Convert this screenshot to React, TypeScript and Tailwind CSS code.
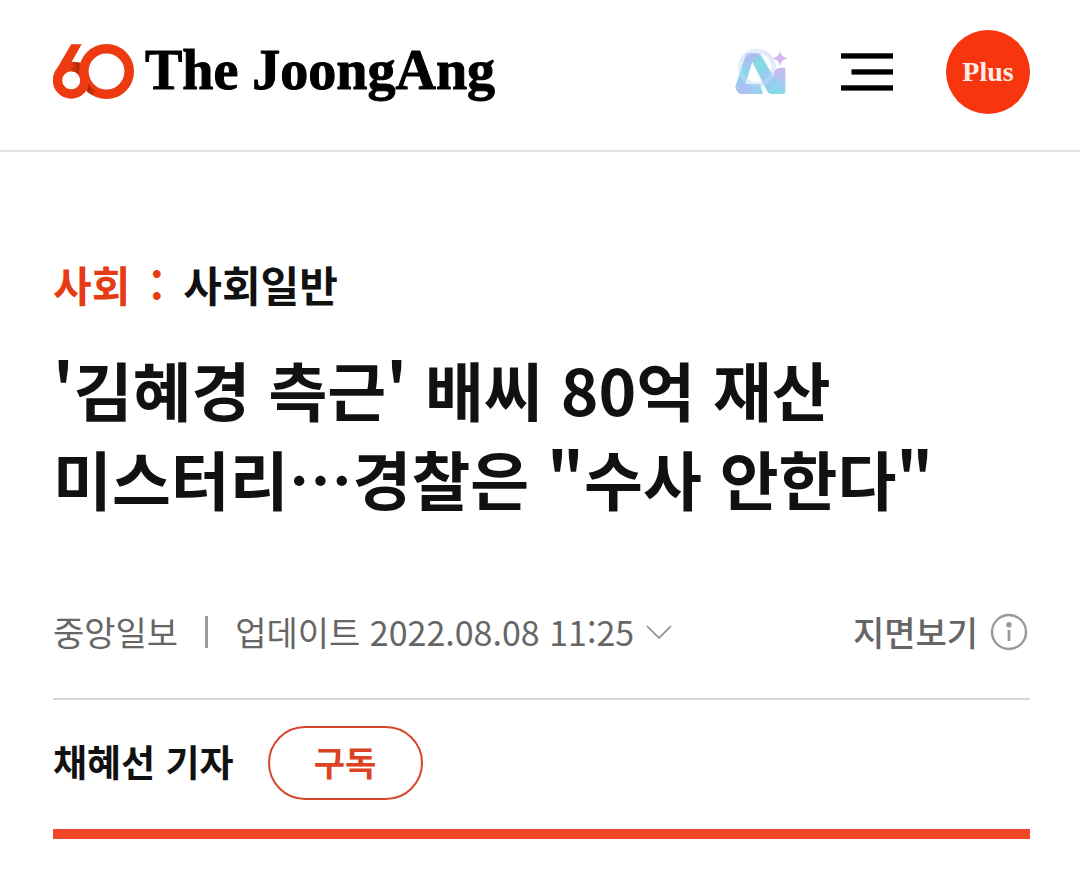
import type { ReactNode } from "react"

interface Article {
  section: string
  subsection: string
  title: string[]
  source: string
  updatedAt: string
  reporter: string
}

const article: Article = {
  section: "사회",
  subsection: "사회일반",
  title: ["'김혜경 측근' 배씨 80억 재산", "미스터리…경찰은 \"수사 안한다\""],
  source: "중앙일보",
  updatedAt: "2022.08.08 11:25",
  reporter: "채혜선 기자",
}

function SixtyMark() {
  return (
    <svg width="82" height="56" viewBox="53 43 82 56" fill="none" aria-hidden="true">
      <defs>
        <linearGradient id="fold-top" x1="70" y1="0" x2="84" y2="0" gradientUnits="userSpaceOnUse">
          <stop offset="0" stopColor="#ee3a10" />
          <stop offset="1" stopColor="#8f1d08" />
        </linearGradient>
        <linearGradient id="fold-bottom" x1="87" y1="84" x2="97" y2="94" gradientUnits="userSpaceOnUse">
          <stop offset="0" stopColor="#8f1d08" />
          <stop offset="1" stopColor="#ee3a10" />
        </linearGradient>
      </defs>
      <circle cx="71.2" cy="79.3" r="13.7" stroke="#ee3a10" strokeWidth="9.4" />
      <path d="M69 61.8 Q77 59 84 64 L80 74 Q76 70 69 70Z" fill="url(#fold-top)" />
      <path d="M71.2 43.2 H81.6 L70.5 63 L66 72 L54 76 Q54.5 71.5 57 67.5Z" fill="#ee3a10" />
      <circle cx="106.5" cy="70.5" r="22.7" stroke="#ee3a10" strokeWidth="9.6" />
      <path d="M88.5 83.5 Q91 87.5 96 90.5 L92 94 Q88 92 86.5 90 Q89 87 88.5 83.5Z" fill="url(#fold-bottom)" />
    </svg>
  )
}

function AiMark() {
  return (
    <svg width="53" height="48" viewBox="46 50 159 144" fill="none" aria-hidden="true">
      <defs>
        <linearGradient id="ai-left" x1="95" y1="65" x2="60" y2="185" gradientUnits="userSpaceOnUse">
          <stop offset="0" stopColor="#b9b5f3" />
          <stop offset="0.5" stopColor="#86d9ea" />
          <stop offset="1" stopColor="#b0bcf3" />
        </linearGradient>
        <linearGradient id="ai-base" x1="60" y1="0" x2="130" y2="0" gradientUnits="userSpaceOnUse">
          <stop offset="0" stopColor="#b0bcf3" />
          <stop offset="1" stopColor="#8fd6ee" />
        </linearGradient>
        <linearGradient id="ai-right" x1="95" y1="66" x2="180" y2="188" gradientUnits="userSpaceOnUse">
          <stop offset="0" stopColor="#b7b2f3" />
          <stop offset="0.25" stopColor="#80dfe4" />
          <stop offset="0.6" stopColor="#a0c6f5" />
          <stop offset="1" stopColor="#84dde8" />
        </linearGradient>
        <linearGradient id="ai-stem" x1="0" y1="108" x2="0" y2="188" gradientUnits="userSpaceOnUse">
          <stop offset="0" stopColor="#cdb6f0" />
          <stop offset="1" stopColor="#8cd6ec" />
        </linearGradient>
      </defs>
      <circle cx="112" cy="109" r="50" stroke="#e2ecfc" strokeWidth="14" />
      <path d="M78 70 Q80 66 86 66 H108 L98 92 L74 168 L64 188 Q50 184 47 166Z" fill="url(#ai-left)" />
      <path d="M60 158 H121 L130 188 H66 Q55 186 50 174Z" fill="url(#ai-base)" />
      <path d="M161 126 Q166 111 182 109 H197 V180 Q196 188 187 188 H161Z" fill="url(#ai-stem)" />
      <path d="M87 66 H114 Q121 66 125 73 L190 184 Q186 188 176 188 H154 Q147 188 142 180 L98 92Z" fill="url(#ai-right)" />
      <circle cx="112" cy="109" r="50" stroke="#e2ecfc" strokeOpacity="0.25" strokeWidth="14" />
      <path d="M181 59 Q185 77 203 81 Q185 85 181 104 Q177 85 159 81 Q177 77 181 59Z" fill="#d3b8f2" />
    </svg>
  )
}

function MenuIcon() {
  return (
    <svg width="52" height="38" viewBox="0 0 52 38" fill="#000" aria-hidden="true">
      <rect y="0.3" width="52" height="5.3" />
      <rect x="10.5" y="16.3" width="41.5" height="5.3" />
      <rect y="32.3" width="52" height="5.3" />
    </svg>
  )
}

function Header() {
  return (
    <header className="flex items-center justify-between border-b-2 border-[#e2e2e2] pt-[30px] pr-[50px] pb-9 pl-[53px]">
      <a href="#" className="flex items-center gap-[10px]">
        <SixtyMark />
        <span className="pb-1 font-['Liberation_Serif',serif] text-[56px] leading-[60px] font-bold whitespace-nowrap text-black [-webkit-text-stroke:1px_#000]">
          The JoongAng
        </span>
      </a>
      <nav className="flex items-center gap-[53px]">
        <button type="button" aria-label="AI">
          <AiMark />
        </button>
        <button type="button" aria-label="메뉴">
          <MenuIcon />
        </button>
        <a
          href="#"
          className="flex size-[84px] items-center justify-center rounded-full bg-[#f7350f] font-['Liberation_Serif',serif] text-[28px] font-bold text-[#ffece4]"
        >
          Plus
        </a>
      </nav>
    </header>
  )
}

function MetaRow({ children }: { children: ReactNode }) {
  return (
    <div className="flex items-center justify-between border-b-2 border-[#d6d6d6] pb-[38px] text-[34px] leading-[56px] text-[#666]">
      {children}
    </div>
  )
}

export default function App() {
  return (
    <div className="min-h-screen bg-white font-['Noto_Sans_CJK_KR',sans-serif] text-[#111]" lang="ko">
      <Header />

      <main className="pt-[102px] pr-[50px] pl-[53px]">
        <div className="flex items-center text-[42px] leading-[60px] font-bold">
          <a href="#" className="text-[#e63c16]">{article.section}</a>
          <span className="w-[53px] text-center text-[#e63c16]">:</span>
          <a href="#">{article.subsection}</a>
        </div>

        <h1 className="mt-[30px] text-[64px] leading-[89px] font-bold">
          {article.title.map((line) => (
            <span key={line} className="block">{line}</span>
          ))}
        </h1>

        <div className="mt-[82px]">
          <MetaRow>
            <div className="flex items-center">
              <span>{article.source}</span>
              <span className="mx-[27px] h-8 w-[3px] bg-[#999]" />
              <button type="button" className="flex items-center gap-3">
                <span>업데이트 {article.updatedAt}</span>
                <svg width="26" height="14" viewBox="0 0 26 14" fill="none" stroke="#888" strokeWidth="1.6" aria-hidden="true">
                  <path d="M1 1 L13 13 L25 1" />
                </svg>
              </button>
            </div>
            <button type="button" className="flex items-center gap-3 pr-[2px] font-medium">
              <span>지면보기</span>
              <svg width="38" height="38" viewBox="0 0 38 38" fill="none" aria-hidden="true">
                <circle cx="19" cy="19" r="17" stroke="#999" strokeWidth="2.4" />
                <circle cx="19" cy="11.7" r="2.7" fill="#999" />
                <path d="M19 17 V28" stroke="#999" strokeWidth="2.8" />
              </svg>
            </button>
          </MetaRow>
        </div>

        <div className="flex items-center gap-[34px] border-b-10 border-[#ef4727] pt-[26px] pb-[29px]">
          <a href="#" className="pb-1 text-[37px] leading-[56px] font-bold">{article.reporter}</a>
          <button
            type="button"
            className="h-[74px] w-[155px] rounded-full border-2 border-[#d6482b] pb-1 text-[34px] font-bold text-[#db4322]"
          >
            구독
          </button>
        </div>
      </main>
    </div>
  )
}
